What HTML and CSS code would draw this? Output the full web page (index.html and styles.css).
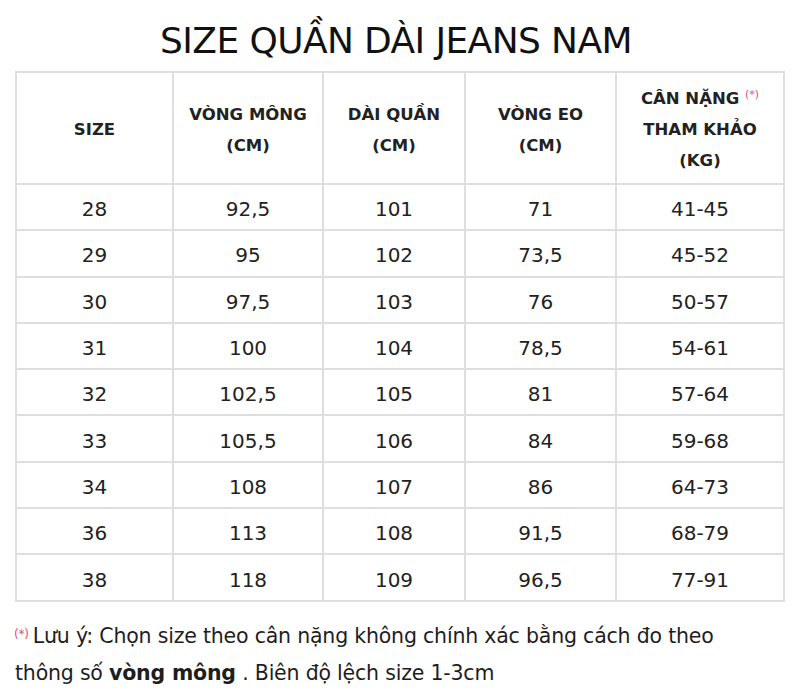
FILE: index.html
```html
<!DOCTYPE html>
<html lang="vi">
<head>
<meta charset="utf-8">
<title>Size quần dài jeans nam</title>
<link rel="stylesheet" href="styles.css">
</head>
<body>
<div class="page">
  <h1 class="title">SIZE QUẦN DÀI JEANS NAM</h1>
  <table class="size-table">
    <colgroup>
      <col class="c1"><col class="c2"><col class="c3"><col class="c4"><col class="c5">
    </colgroup>
    <thead>
      <tr>
        <th>SIZE</th>
        <th>VÒNG MÔNG<br>(CM)</th>
        <th>DÀI QUẦN<br>(CM)</th>
        <th>VÒNG EO<br>(CM)</th>
        <th>CÂN NẶNG <sup class="mark">(*)</sup><br>THAM KHẢO<br>(KG)</th>
      </tr>
    </thead>
    <tbody>
      <tr><td>28</td><td>92,5</td><td>101</td><td>71</td><td>41-45</td></tr>
      <tr><td>29</td><td>95</td><td>102</td><td>73,5</td><td>45-52</td></tr>
      <tr><td>30</td><td>97,5</td><td>103</td><td>76</td><td>50-57</td></tr>
      <tr><td>31</td><td>100</td><td>104</td><td>78,5</td><td>54-61</td></tr>
      <tr><td>32</td><td>102,5</td><td>105</td><td>81</td><td>57-64</td></tr>
      <tr><td>33</td><td>105,5</td><td>106</td><td>84</td><td>59-68</td></tr>
      <tr><td>34</td><td>108</td><td>107</td><td>86</td><td>64-73</td></tr>
      <tr><td>36</td><td>113</td><td>108</td><td>91,5</td><td>68-79</td></tr>
      <tr><td>38</td><td>118</td><td>109</td><td>96,5</td><td>77-91</td></tr>
    </tbody>
  </table>
  <p class="note"><sup class="mark">(*)</sup>Lưu ý: Chọn size theo cân nặng không chính xác bằng cách đo theo<br>thông số <b>vòng mông</b> . Biên độ lệch size 1-3cm</p>
</div>
</body>
</html>
```
FILE: styles.css
```css
html, body {
  margin: 0;
  padding: 0;
  background: #ffffff;
}
.page {
  width: 801px;
  padding: 0 0 0 15px;
  box-sizing: border-box;
  font-family: "DejaVu Sans", "Liberation Sans", sans-serif;
  color: #1e1e1e;
}
.title {
  margin: 0;
  height: 71px;
  padding-top: 20px;
  box-sizing: border-box;
  width: 762px;
  text-align: center;
  font-size: 36px;
  font-weight: 400;
  line-height: 42px;
  letter-spacing: -0.6px;
  color: #111;
}
.size-table {
  border-collapse: collapse;
  table-layout: fixed;
  width: 770px;
}
.c1 { width: 157px; }
.c2 { width: 150px; }
.c3 { width: 142px; }
.c4 { width: 151px; }
.c5 { width: 168px; }
.size-table th,
.size-table td {
  border: 2px solid #dedede;
  text-align: center;
  padding: 0;
  box-sizing: border-box;
}
.size-table th {
  height: 112px;
  font-size: 16.5px;
  font-weight: 700;
  line-height: 31px;
  padding-top: 3px;
  color: #222;
}
.size-table td {
  height: 46.3px;
  font-size: 20px;
  font-weight: 400;
  padding-top: 4px;
  color: #222;
}
.mark {
  color: #e0507a;
  font-size: 11px;
  font-weight: 400;
  vertical-align: top;
  position: relative;
  top: -4px;
}
.note {
  margin: 16px 0 0 0;
  font-size: 20.5px;
  line-height: 37px;
  letter-spacing: -0.2px;
  color: #1e1e1e;
}
.note .mark {
  top: -2px;
  margin-left: -1px;
  margin-right: 4px;
  font-size: 12px;
}
.note b {
  font-weight: 700;
}
```
